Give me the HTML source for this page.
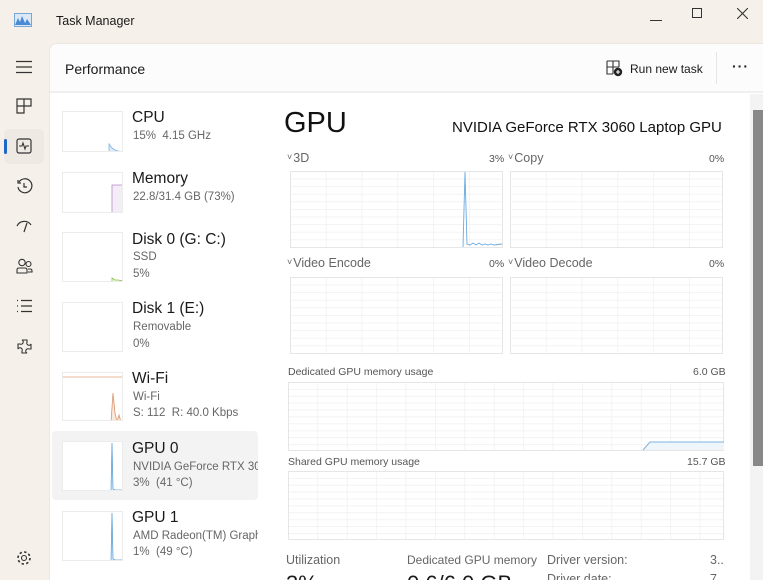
<!DOCTYPE html>
<html><head><meta charset="utf-8"><style>
*{margin:0;padding:0;box-sizing:border-box}
html,body{width:763px;height:580px;overflow:hidden}
body{background:#f6f0ea;font-family:"Liberation Sans",sans-serif;color:#1a1a1a;position:relative}
.a{position:absolute;white-space:nowrap}
.pane{position:absolute;left:49px;top:43px;width:720px;height:540px;background:#fff;border-top-left-radius:8px;border:1px solid #ebe6e1}
.hdr{position:absolute;left:50px;top:44px;width:713px;height:49px;background:#fcfcfc;border-bottom:2px solid #efefef;border-top-left-radius:8px}
.thumb{position:absolute;left:62px;width:61px;background:#fff;border:1px solid #ececec;overflow:hidden}
.t1{font-size:15.5px;color:#1a1a1a}
.t2{font-size:11.5px;color:#666}
.sm{font-size:10.5px;color:#555}
.lbl{font-size:12.5px;color:#666}
.ch{font-size:9px;vertical-align:2px;margin-right:1px}
svg{position:absolute}
</style></head><body>
<!-- title bar -->
<svg style="left:14px;top:13px" width="18" height="14" viewBox="0 0 18 14"><rect x="0.5" y="0.5" width="17" height="13" fill="#dbe8f5" stroke="#7aa6d6"/><path d="M1 12 L4 5 L6 9 L8 3 L11 10 L13 6 L17 12 Z" fill="#4a8ad6"/></svg>
<div class="a" style="left:56px;top:14px;font-size:12.5px">Task Manager</div>
<div class="a" style="left:650px;top:20px;width:12px;height:1px;background:#333"></div>
<div class="a" style="left:692px;top:8px;width:10px;height:10px;border:1px solid #333"></div>
<svg style="left:737px;top:8px" width="11" height="11"><path d="M0 0L11 11M11 0L0 11" stroke="#333" stroke-width="1.1"/></svg>
<!-- sidebar -->
<svg style="left:16px;top:60px" width="16" height="14"><path d="M0 1.5H16M0 7H16M0 12.5H16" stroke="#333" stroke-width="1.2"/></svg>
<svg style="left:16px;top:98px" width="16" height="16"><path d="M1 1H8V15H1ZM8 1H15V8H8M1 8H15" fill="none" stroke="#333" stroke-width="1.2"/></svg>
<div class="a" style="left:4px;top:129px;width:40px;height:35px;background:#efe9e4;border-radius:5px"></div>
<div class="a" style="left:4px;top:139px;width:3px;height:15px;background:#1e67c4;border-radius:2px"></div>
<svg style="left:16px;top:138px" width="16" height="16"><rect x="1" y="1" width="14" height="14" rx="2" fill="none" stroke="#333" stroke-width="1.2"/><path d="M3 8H6L7 5L9 11L10 8H13" fill="none" stroke="#333" stroke-width="1.1"/></svg>
<svg style="left:16px;top:178px" width="17" height="17"><path d="M3 4A7 7 0 1 1 2 9" fill="none" stroke="#333" stroke-width="1.2"/><path d="M2 2V5H5M8 5V9H11" fill="none" stroke="#333" stroke-width="1.2"/></svg>
<svg style="left:15px;top:218px" width="18" height="16"><path d="M2 8A8 8 0 0 1 16 7M9 14L12 5" fill="none" stroke="#333" stroke-width="1.2"/></svg>
<svg style="left:16px;top:258px" width="17" height="17"><circle cx="6" cy="4.5" r="3.2" fill="none" stroke="#333" stroke-width="1.1"/><circle cx="12.5" cy="6" r="2.5" fill="none" stroke="#333" stroke-width="1.1"/><path d="M1 15V12Q1 10 3 10H9Q11 10 11 12V15ZM12 11H14Q16 11 16 13V14H12" fill="none" stroke="#333" stroke-width="1.1"/></svg>
<svg style="left:16px;top:299px" width="16" height="14"><path d="M5 1.5H16M5 7H16M5 12.5H16M1 1.5H2M1 7H2M1 12.5H2" stroke="#333" stroke-width="1.2"/></svg>
<svg style="left:16px;top:338px" width="17" height="17"><path d="M6 2H11V4A2 2 0 0 0 15 6V11H13A2 2 0 0 0 11 15H6V13A2 2 0 0 0 2 11V6H4A2 2 0 0 0 6 2Z" fill="none" stroke="#333" stroke-width="1.1"/></svg>
<svg style="left:16px;top:550px" width="16" height="16"><circle cx="8" cy="8" r="2.5" fill="none" stroke="#333" stroke-width="1.1"/><circle cx="8" cy="8" r="6" fill="none" stroke="#333" stroke-width="1.6" stroke-dasharray="2.4 2.3"/></svg>
<!-- pane -->
<div class="pane"></div>
<div class="hdr"></div>
<div class="a" style="left:65px;top:61px;font-size:14px;color:#1a1a1a">Performance</div>
<svg style="left:606px;top:60px" width="17" height="17"><path d="M1 1H13V7M1 1V14H7M7 1V14M1 7H13" fill="none" stroke="#333" stroke-width="1.1"/><circle cx="12" cy="12" r="4.2" fill="#222"/><path d="M12 10V14M10 12H14" stroke="#fff" stroke-width="1.1"/></svg>
<div class="a" style="left:630px;top:62px;font-size:12px">Run new task</div>
<div class="a" style="left:716px;top:52px;width:1px;height:32px;background:#e6e6e6"></div>
<div class="a" style="left:732px;top:58px;font-size:14px;letter-spacing:1px;font-weight:bold">···</div>
<!-- left list -->
<div class="a" style="left:52px;top:431px;width:206px;height:69px;background:#f3f3f3;border-radius:4px"></div>
<div class="thumb" style="top:111px;height:41px"><svg width="61" height="41"><path d="M46 41V32L49 36L52 38L55 39L61 40V41Z" fill="#dbeaf7" stroke="#7fb3e0" stroke-width="0.8"/></svg></div>
<div class="a t1" style="left:132px;top:109px">CPU</div><div class="a t2" style="left:133px;top:130px">15%&nbsp; 4.15 GHz</div>
<div class="thumb" style="top:172px;height:41px"><svg width="61" height="41"><path d="M49 41V12H61V41Z" fill="#f3eef5" stroke="#b98ac9" stroke-width="0.8"/></svg></div>
<div class="a t1" style="left:132px;top:170px">Memory</div><div class="a t2" style="left:133px;top:191px">22.8/31.4 GB (73%)</div>
<div class="thumb" style="top:232px;height:50px"><svg width="61" height="50"><path d="M49 50V45L52 47L55 47L61 48V50Z" fill="#e8f5dc" stroke="#8bc34a" stroke-width="0.8"/></svg></div>
<div class="a t1" style="left:132px;top:231px">Disk 0 (G: C:)</div><div class="a t2" style="left:133px;top:251px">SSD</div><div class="a t2" style="left:133px;top:268px">5%</div>
<div class="thumb" style="top:302px;height:50px"></div>
<div class="a t1" style="left:132px;top:300px">Disk 1 (E:)</div><div class="a t2" style="left:133px;top:321px">Removable</div><div class="a t2" style="left:133px;top:338px">0%</div>
<div class="thumb" style="top:372px;height:49px"><svg width="61" height="49"><path d="M0 4H61" stroke="#e8b89a" stroke-width="1"/><path d="M48 49L50 20L52 40L54 49L56 42L58 49Z" fill="#fbe8dc" stroke="#d9956a" stroke-width="0.8"/></svg></div>
<div class="a t1" style="left:132px;top:370px">Wi-Fi</div><div class="a t2" style="left:133px;top:391px">Wi-Fi</div><div class="a t2" style="left:133px;top:407px">S: 112&nbsp; R: 40.0 Kbps</div>
<div class="thumb" style="top:441px;height:50px"><svg width="61" height="50"><path d="M48 50L49 1L50 47L52 48L61 48V50Z" fill="#e6f1fa" stroke="#5c9fd6" stroke-width="0.8"/></svg></div>
<div class="a t1" style="left:132px;top:440px">GPU 0</div><div class="a t2" style="left:133px;top:461px;width:125px;overflow:hidden">NVIDIA GeForce RTX 3060</div><div class="a t2" style="left:133px;top:477px">3%&nbsp; (41 °C)</div>
<div class="thumb" style="top:511px;height:50px"><svg width="61" height="50"><path d="M48 50L49 1L50 47L52 48L61 48V50Z" fill="#e6f1fa" stroke="#5c9fd6" stroke-width="0.8"/></svg></div>
<div class="a t1" style="left:132px;top:509px">GPU 1</div><div class="a t2" style="left:133px;top:530px;width:125px;overflow:hidden">AMD Radeon(TM) Graphics</div><div class="a t2" style="left:133px;top:546px">1%&nbsp; (49 °C)</div>
<!-- right content -->
<div class="a" style="left:284px;top:107px;font-size:29px;color:#111">GPU</div>
<div class="a" style="left:452px;top:119px;font-size:15px;color:#111">NVIDIA GeForce RTX 3060 Laptop GPU</div>
<div class="a lbl" style="left:287px;top:151px"><span class="ch">˅</span>3D</div><div class="a sm" style="left:489px;top:153px">3%</div>
<div class="a lbl" style="left:508px;top:151px"><span class="ch">˅</span>Copy</div><div class="a sm" style="left:709px;top:153px">0%</div>
<div class="a lbl" style="left:287px;top:256px"><span class="ch">˅</span>Video Encode</div><div class="a sm" style="left:489px;top:258px">0%</div>
<div class="a lbl" style="left:508px;top:256px"><span class="ch">˅</span>Video Decode</div><div class="a sm" style="left:709px;top:258px">0%</div>
<svg width="0" height="0"><defs>
<pattern id="g" width="35.8" height="7.6" patternUnits="userSpaceOnUse"><path d="M0 0H36M0 0V8" stroke="#efefef" stroke-width="1.4" fill="none"/></pattern>
<pattern id="g2" width="29.4" height="6.9" patternUnits="userSpaceOnUse"><path d="M0 0H30M0 0V7" stroke="#efefef" stroke-width="1.4" fill="none"/></pattern>
</defs></svg>
<svg style="left:290px;top:171px" width="213" height="77"><rect x="0.5" y="0.5" width="212" height="76" fill="url(#g)" stroke="#e6e6e6"/><path d="M173 76L175 1L177 73L180 74L183 72L186 74L189 72L192 74L195 73L198 74L201 73L204 74L212 73" fill="none" stroke="#6aaadf" stroke-width="0.9"/></svg>
<svg style="left:510px;top:171px" width="213" height="77"><rect x="0.5" y="0.5" width="212" height="76" fill="url(#g)" stroke="#e6e6e6"/></svg>
<svg style="left:290px;top:277px" width="213" height="77"><rect x="0.5" y="0.5" width="212" height="76" fill="url(#g)" stroke="#e6e6e6"/></svg>
<svg style="left:510px;top:277px" width="213" height="77"><rect x="0.5" y="0.5" width="212" height="76" fill="url(#g)" stroke="#e6e6e6"/></svg>
<div class="a sm" style="left:288px;top:366px">Dedicated GPU memory usage</div><div class="a sm" style="left:693px;top:366px">6.0 GB</div>
<svg style="left:288px;top:382px" width="436" height="69"><rect x="0.5" y="0.5" width="435" height="68" fill="url(#g2)" stroke="#e6e6e6"/><path d="M355 68L362 60H436V68Z" fill="#eef5fb"/><path d="M355 68L362 60H436" fill="none" stroke="#7fb3e0" stroke-width="1"/></svg>
<div class="a sm" style="left:288px;top:456px">Shared GPU memory usage</div><div class="a sm" style="left:687px;top:456px">15.7 GB</div>
<svg style="left:288px;top:471px" width="436" height="69"><rect x="0.5" y="0.5" width="435" height="68" fill="url(#g2)" stroke="#e6e6e6"/></svg>
<div class="a lbl" style="left:286px;top:553px">Utilization</div>
<div class="a lbl" style="left:407px;top:553px;font-size:12px">Dedicated GPU memory</div>
<div class="a lbl" style="left:547px;top:553px">Driver version:</div>
<div class="a lbl" style="left:710px;top:553px">3..</div>
<div class="a" style="left:286px;top:571px;font-size:22px">3%</div>
<div class="a" style="left:407px;top:571px;font-size:22px">0.6/6.0 GB</div>
<div class="a lbl" style="left:547px;top:572px">Driver date:</div>
<div class="a lbl" style="left:710px;top:572px">7</div>
<!-- scrollbar -->
<div class="a" style="left:750px;top:94px;width:13px;height:486px;background:#f3f3f3"></div>
<div class="a" style="left:753px;top:110px;width:10px;height:356px;background:#888"></div>
</body></html>
